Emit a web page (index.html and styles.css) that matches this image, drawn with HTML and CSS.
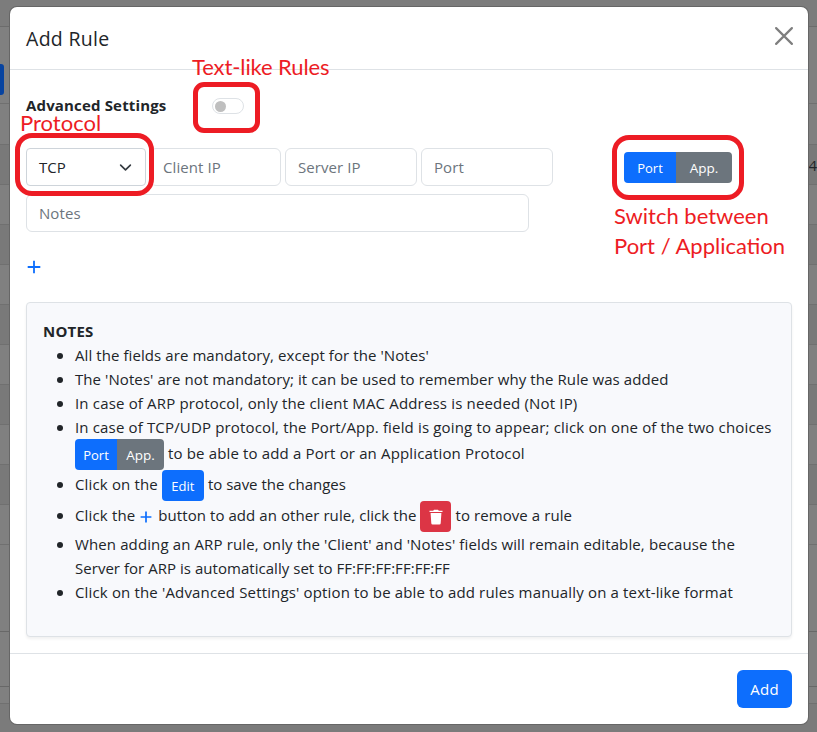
FILE: index.html
```
<!DOCTYPE html>
<html lang="en">
<head>
<meta charset="utf-8">
<title>Add Rule</title>
<link rel="stylesheet" href="styles.css">
</head>
<body>
<div class="page">
  <div class="bar"></div>
  <div class="toolbar"><span class="tool"></span></div>
  <div class="row head"></div>
  <div class="row odd"><span>.4</span></div>
  <div class="row"></div><div class="row odd"></div>
  <div class="row"></div><div class="row odd"></div>
  <div class="row"></div><div class="row odd"></div>
  <div class="row"></div><div class="row odd"></div>
  <div class="row"></div>
  <div class="row rest"></div>
  <div class="row pager"></div>
  <div class="row gap"></div>
  <div class="foot"></div>
</div>
<div class="modal">
  <header class="modal-header">
    <h5 class="title">Add Rule</h5>
    <svg class="close" viewBox="0 0 16 16"><path d="M1 1l14 14M15 1L1 15" stroke="#000" stroke-width="1.9" stroke-linecap="round"/></svg>
  </header>
  <main class="modal-body">
    <div class="advanced"><b class="adv-label">Advanced Settings</b><span class="switch"><i></i></span></div>
    <div class="fields">
      <div class="select"><span>TCP</span><svg width="16" height="16" viewBox="0 0 16 16"><path d="M2 5l6 6 6-6" fill="none" stroke="#343a40" stroke-width="2" stroke-linecap="round" stroke-linejoin="round"/></svg></div>
      <div class="input client"><span>Client IP</span></div>
      <div class="input"><span>Server IP</span></div>
      <div class="input"><span>Port</span></div>
      <div class="group wide"><span class="btn primary left">Port</span><span class="btn secondary right">App.</span></div>
    </div>
    <div class="input notes-input"><span>Notes</span></div>
    <svg class="plus" viewBox="0 0 14 14"><path d="M7 .7v12.6M.7 7h12.6" stroke="#0d6efd" stroke-width="1.8"/></svg>
    <section class="card">
      <b class="card-title">NOTES</b>
      <ul>
        <li><span class="l1">All the fields are mandatory, except for the 'Notes'</span></li>
        <li><span class="l1">The 'Notes' are not mandatory; it can be used to remember why the Rule was added</span></li>
        <li><span class="l3">In case of ARP protocol, only the client MAC Address is needed (Not IP)</span></li>
        <li><span class="l4">In case of TCP/UDP protocol, the Port/App. field is going to appear; click on one of the two choices</span>
          <div class="line choice"><div class="group"><span class="btn primary left">Port</span><span class="btn secondary right">App.</span></div><span class="l5">to be able to add a Port or an Application Protocol</span></div></li>
        <li class="tall"><div class="line"><span class="l5">Click on the</span><span class="btn primary edit">Edit</span><span>to save the changes</span></div></li>
        <li class="tall"><div class="line"><span class="l5">Click the</span><svg class="plus-small" viewBox="0 0 14 14"><path d="M7 .7v12.6M.7 7h12.6" stroke="#0d6efd" stroke-width="2"/></svg><span class="l9">button to add an other rule, click the</span><span class="btn danger"><svg width="14" height="16" viewBox="0 0 14 16"><path fill="#fff" d="M.5 1.7h3.7L5 .7h4l.8 1h3.7V3H.5zM1.6 4h10.8l-.7 10.2a1.3 1.3 0 0 1-1.3 1.2H3.6a1.3 1.3 0 0 1-1.3-1.2z"/></svg></span><span class="l1">to remove a rule</span></div></li>
        <li><span class="l11">When adding an ARP rule, only the 'Client' and 'Notes' fields will remain editable, because the</span><br><span class="l12">Server for ARP is automatically set to FF:FF:FF:FF:FF:FF</span></li>
        <li><span class="l4">Click on the 'Advanced Settings' option to be able to add rules manually on a text-like format</span></li>
      </ul>
    </section>
  </main>
  <footer class="modal-footer"><span class="add">Add</span></footer>
</div>
<div class="ring ring-switch"></div>
<div class="ring ring-protocol"></div>
<div class="ring ring-group"></div>
<div class="callout c-text">Text-like Rules</div>
<div class="callout c-protocol">Protocol</div>
<div class="callout c-switch">Switch between<br>Port / Application</div>
</body>
</html>
```
FILE: styles.css
```
* { box-sizing: border-box; }
body { margin: 0; width: 817px; height: 732px; overflow: hidden; position: relative; font: 15px/24px "Open Sans", "Noto Sans", sans-serif; color: #212529; white-space: nowrap; }
.page { height: 732px; background: #808080; display: flex; flex-direction: column; }
.bar { height: 27px; background: #7c7c7c; border-bottom: 1px solid #6c6c6c; }
.toolbar { height: 77px; padding-top: 37px; border-bottom: 1px solid #707070; }
.tool { display: block; width: 4px; height: 31px; background: #0743a0; border-radius: 0 3px 3px 0; }
.row { flex: none; height: 40px; border-bottom: 1px solid #707070; display: flex; justify-content: flex-end; align-items: center; }
.head { height: 41px; }
.odd { background: #797979; }
.row span { color: #212529; }
.rest { height: 87px; border-color: #686868; }
.pager { height: 55px; border-color: #686868; }
.gap { height: 17px; }
.foot { flex: 1; background: #7b7b7b; }

.modal { position: absolute; left: 10px; top: 7px; width: 798px; height: 717px; border-radius: 7px; background: #fff; display: flex; flex-direction: column; box-shadow: 0 0 0 1px #666; }
.modal-header { height: 63px; flex: none; border-bottom: 1px solid #dee2e6; padding: 1px 15px 0 16px; display: flex; justify-content: space-between; align-items: center; }
.title { margin: 0; font-size: 19.5px; line-height: 30px; font-weight: 500; letter-spacing: .3px; }
.close { width: 18px; height: 18px; opacity: .5; margin-top: -5px; }
.modal-body { flex: 1; padding: 0 16px; display: flex; flex-direction: column; }
.advanced { height: 72px; margin-bottom: 6px; display: flex; align-items: center; }
.adv-label { width: 186px; margin-top: -2px; letter-spacing: .16px; }
.switch { width: 32px; height: 16px; border: 1px solid #dee2e6; border-radius: 8px; padding: 2px; }
.switch i { display: block; width: 11px; height: 11px; border-radius: 50%; background: #bfbfbf; margin-top: -.5px; }
.fields { display: flex; gap: 4px; height: 38px; align-items: flex-start; }
.select, .input { height: 38px; border: 1px solid #dee2e6; border-radius: 6px; background: #fff; display: flex; align-items: center; padding: 0 12px; color: #6c757d; width: 132px; }
.select { width: 120px; color: #212529; justify-content: space-between; border-color: #ced4da; border-radius: 4px; }
.select svg { width: 13px; height: 13px; margin-right: 1px; }
.input span { letter-spacing: .08px; }
.client { width: 131px; }
.notes-input { width: 503px; margin-top: 8px; }
.group { display: flex; }
.wide { margin: 4px 0 0 67px; }
.btn { display: inline-flex; align-items: center; justify-content: center; height: 31px; border-radius: 4px; color: #fff; font-size: 13px; line-height: 21px; flex: none; padding-top: 1px; }
.primary { background: #0d6efd; }
.secondary { background: #6c757d; }
.danger { background: #dc3545; width: 31px; margin: 0 4px; padding: 0; }
.left { width: 42px; border-radius: 4px 0 0 4px; }
.right { width: 47px; border-radius: 0 4px 4px 0; font-size: 13.5px; }
.wide .left { width: 52px; }
.wide .right { width: 56px; }
.edit { width: 42px; margin: 0 4px; }
.plus { width: 14px; height: 14px; margin: 28px 0 0 1px; }
.card { height: 335px; margin-top: 28px; padding: 16px; border: 1px solid #dee2e6; border-radius: 4px; background: #f8f9fc; box-shadow: 0 2px 3px rgba(0,0,0,.06); }
.card-title { display: block; height: 24px; letter-spacing: .2px; }
ul { margin: 0; padding: 0 0 0 32px; list-style: none; }
li { min-height: 24px; position: relative; }
li::before { content: ""; position: absolute; left: -18px; top: 10px; width: 6px; height: 6px; border-radius: 50%; background: #212529; }
.line { display: flex; align-items: center; height: 31px; }
.line > span:not(.btn) { position: relative; top: -2px; }
.choice { gap: 4px; }
.tall { height: 31px; }
.tall::before { top: 12px; }
.plus-small { width: 12px; height: 12px; margin: 0 6px 0 5px; }
.l1 { letter-spacing: .08px; }
.l3 { letter-spacing: .17px; }
.l4 { letter-spacing: .155px; }
.l5 { letter-spacing: .15px; }
.l9 { letter-spacing: .07px; }
.l11 { letter-spacing: .12px; }
.l12 { letter-spacing: .035px; }
.modal-footer { height: 71px; flex: none; border-top: 1px solid #dee2e6; padding: 16px; display: flex; justify-content: flex-end; }
.add { width: 55px; height: 38px; border-radius: 6px; background: #0d6efd; color: #fff; display: flex; align-items: center; justify-content: center; letter-spacing: .3px; }

.ring { position: absolute; border: 5px solid #ed1c24; }
.ring-switch { left: 193px; top: 82px; width: 67px; height: 51px; border-radius: 11px; }
.ring-protocol { left: 15px; top: 133px; width: 139px; height: 63px; border-radius: 17px; }
.ring-group { left: 612px; top: 135px; width: 132px; height: 65px; border-radius: 17px; }
.callout { position: absolute; font: 22px/30px Lato, sans-serif; color: #ed1c24; }
.c-text { left: 192px; top: 52px; letter-spacing: -.1px; }
.c-protocol { left: 20px; top: 108px; }
.c-switch { left: 614px; top: 201px; }
```
